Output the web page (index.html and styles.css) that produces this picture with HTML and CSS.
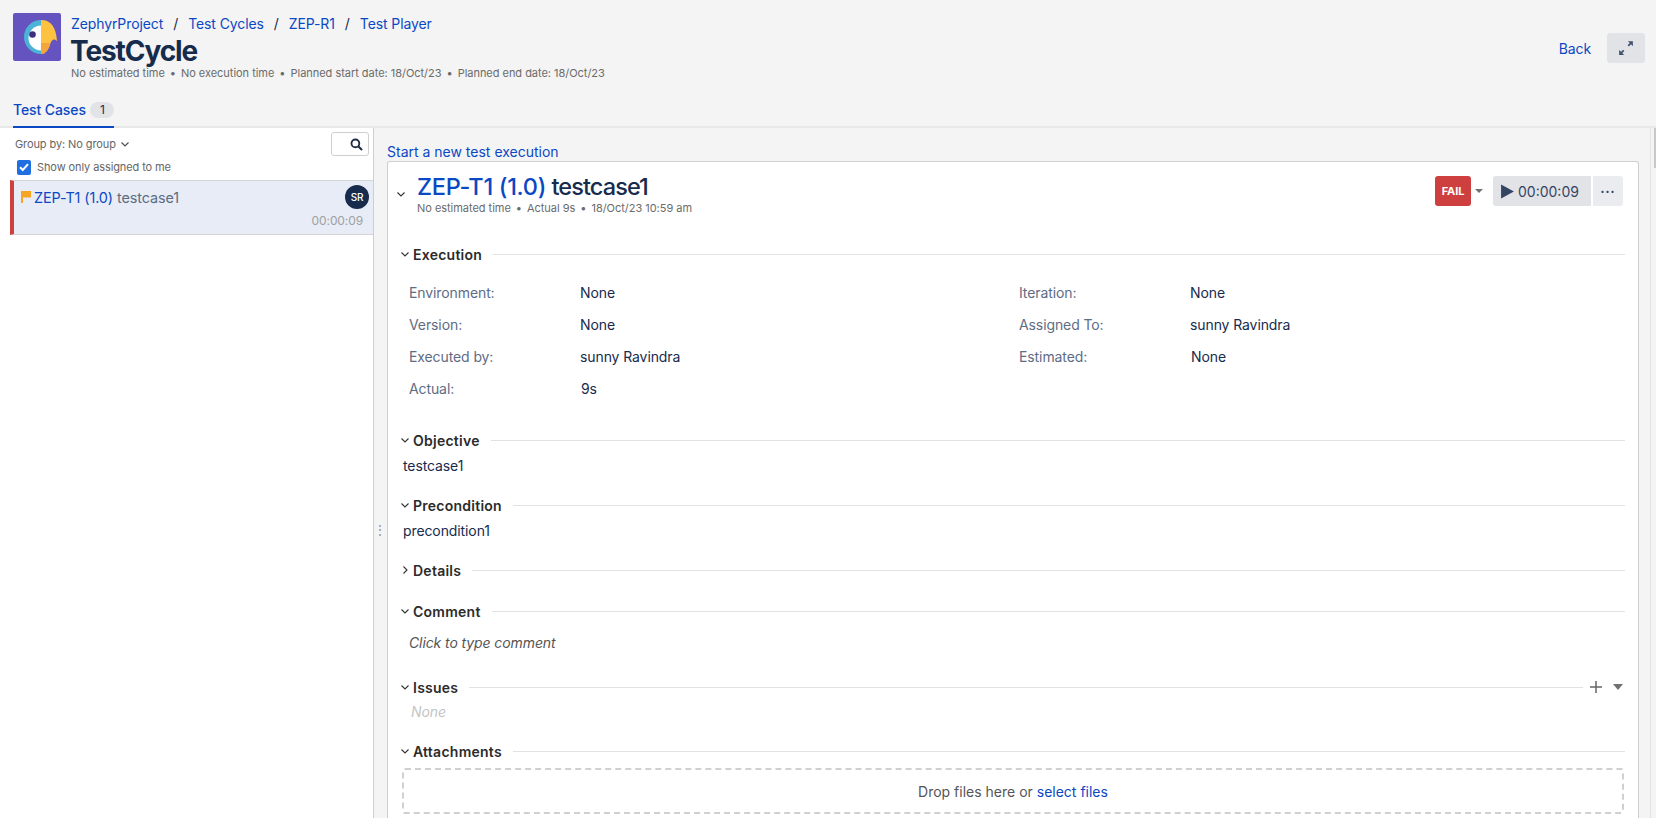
FILE: index.html
```html
<!DOCTYPE html>
<html lang="en">
<head>
    <meta charset="UTF-8">
    <meta name="viewport" content="width=device-width, initial-scale=1.0">
    <title>Test Player</title>
    <link rel="stylesheet" href="styles.css">
</head>
<body>

    <!-- Page header -->
    <header class="page-header">
        <svg class="logo" viewBox="0 0 48 48" width="48" height="48">
            <rect width="48" height="48" rx="2" fill="#6554c0"/>
            <path d="M28 7A17 17 0 0 0 28 41Z" fill="#4bb3d6"/>
            <path d="M28 12.5A11.5 11.5 0 0 0 28 37.500Z" fill="#fff"/>
            <path d="M28 7C38 7 43 14 44 28C41 25.500 39 26.500 37.500 30C36 36 33 41 28 41Z" fill="#fcc240"/>
            <path d="M28 30H37.300C36 36 33 41 28 41Z" fill="#f4a63b"/>
            <circle cx="19.500" cy="21.500" r="3.300" fill="#40307f"/>
        </svg>
        <div class="header-text">
            <nav class="crumbs">
                <a>ZephyrProject</a><span>/</span><a>Test Cycles</a><span>/</span><a>ZEP-R1</a><span>/</span><a>Test Player</a>
            </nav>
            <h1>TestCycle</h1>
            <div class="meta">No estimated time<i>•</i>No execution time<i>•</i>Planned start date: 18/Oct/23<i>•</i>Planned end date: 18/Oct/23</div>
        </div>
        <div class="header-actions">
            <a class="back">Back</a>
            <button class="expand">
                <svg viewBox="0 0 16 16" width="20" height="20"><path d="M9.500 2.500H13.500V6.500L12 5 10.300 6.700 9.300 5.700 11 4ZM6.500 13.500H2.500V9.500L4 11 5.700 9.300 6.700 10.300 5 12Z" fill="#42526e"/></svg>
            </button>
        </div>
    </header>

    <div class="tabs">
        <div class="tab">Test Cases <span class="count">1</span></div>
    </div>

    <main class="player">
        <!-- Left list -->
        <aside class="side">
            <div class="side-tools">
                <div class="side-filters">
                    <div class="group-by">Group by: No group
                        <svg class="chev" viewBox="0 0 10 10" width="10" height="10"><path d="M1.500 3.500L5 7 8.500 3.500" fill="none" stroke="#505050" stroke-width="1.200"/></svg>
                    </div>
                    <label class="only-me">
                        <span class="check"><svg viewBox="0 0 14 14" width="14" height="14"><path d="M3 7.200L5.800 10 11 4.200" fill="none" stroke="#fff" stroke-width="2"/></svg></span>
                        Show only assigned to me
                    </label>
                </div>
                <button class="search">
                    <svg viewBox="0 0 14 14" width="13" height="13"><circle cx="5.800" cy="5.800" r="4.200" fill="none" stroke="#1f2a44" stroke-width="2"/><path d="M8.800 8.800L13 13" stroke="#1f2a44" stroke-width="2.200"/></svg>
                </button>
            </div>
            <div class="case-item">
                <div class="case-top">
                    <svg class="flag" viewBox="0 0 10 12" width="10" height="12"><path d="M0 0H10V6.500H2V12H0Z" fill="#f5a623"/></svg>
                    <span class="case-name"><a>ZEP-T1 (1.0)</a> testcase1</span>
                    <span class="avatar">SR</span>
                </div>
                <div class="case-time">00:00:09</div>
            </div>
        </aside>

        <div class="splitter"><span class="dots">⋮</span></div>

        <!-- Execution panel -->
        <section class="content">
            <a class="start-link">Start a new test execution</a>
            <div class="card">
                <div class="card-head">
                    <svg class="title-chev" viewBox="0 0 10 10" width="10" height="10"><path d="M1.500 3.500L5 7 8.500 3.500" fill="none" stroke="#333" stroke-width="1.100"/></svg>
                    <div class="title-block">
                        <h2><a>ZEP-T1 (1.0)</a> testcase1</h2>
                        <div class="meta">No estimated time<i>•</i>Actual 9s<i>•</i>18/Oct/23 10:59 am</div>
                    </div>
                    <div class="card-actions">
                        <span class="status">FAIL</span>
                        <span class="caret"></span>
                        <button class="timer">
                            <svg viewBox="0 0 14 14" width="15" height="15"><path d="M1 0.500L13 7 1 13.500Z" fill="#344563"/></svg>
                            00:00:09
                        </button>
                        <button class="more">•••</button>
                    </div>
                </div>

                <div class="sec-head sec-execution">
                    <svg viewBox="0 0 10 10" width="10" height="10"><path d="M1.500 3.500L5 7 8.500 3.500" fill="none" stroke="#333" stroke-width="1.100"/></svg>
                    <b>Execution</b><hr>
                </div>
                <div class="fields">
                    <div class="field"><span>Environment:</span>None</div>
                    <div class="field"><span>Iteration:</span>None</div>
                    <div class="field"><span>Version:</span>None</div>
                    <div class="field"><span>Assigned To:</span>sunny Ravindra</div>
                    <div class="field"><span>Executed by:</span>sunny Ravindra</div>
                    <div class="field field-off"><span>Estimated:</span>None</div>
                    <div class="field field-off"><span>Actual:</span>9s</div>
                </div>

                <div class="sec-head sec-objective">
                    <svg viewBox="0 0 10 10" width="10" height="10"><path d="M1.500 3.500L5 7 8.500 3.500" fill="none" stroke="#333" stroke-width="1.100"/></svg>
                    <b>Objective</b><hr>
                </div>
                <p class="sec-text">testcase1</p>

                <div class="sec-head sec-precondition">
                    <svg viewBox="0 0 10 10" width="10" height="10"><path d="M1.500 3.500L5 7 8.500 3.500" fill="none" stroke="#333" stroke-width="1.100"/></svg>
                    <b>Precondition</b><hr>
                </div>
                <p class="sec-text">precondition1</p>

                <div class="sec-head sec-details">
                    <svg viewBox="0 0 10 10" width="10" height="10"><path d="M3.500 1.500L7 5 3.500 8.500" fill="none" stroke="#333" stroke-width="1.100"/></svg>
                    <b>Details</b><hr>
                </div>

                <div class="sec-head sec-comment">
                    <svg viewBox="0 0 10 10" width="10" height="10"><path d="M1.500 3.500L5 7 8.500 3.500" fill="none" stroke="#333" stroke-width="1.100"/></svg>
                    <b>Comment</b><hr>
                </div>
                <p class="comment-hint">Click to type comment</p>

                <div class="sec-head sec-issues">
                    <svg viewBox="0 0 10 10" width="10" height="10"><path d="M1.500 3.500L5 7 8.500 3.500" fill="none" stroke="#333" stroke-width="1.100"/></svg>
                    <b>Issues</b><hr>
                    <svg class="plus" viewBox="0 0 12 12" width="12" height="12"><path d="M6 0V12M0 6H12" stroke="#666" stroke-width="1.500"/></svg>
                    <span class="caret"></span>
                </div>
                <p class="none-text">None</p>

                <div class="sec-head sec-attachments">
                    <svg viewBox="0 0 10 10" width="10" height="10"><path d="M1.500 3.500L5 7 8.500 3.500" fill="none" stroke="#333" stroke-width="1.100"/></svg>
                    <b>Attachments</b><hr>
                </div>
                <div class="dropzone">Drop files here or <a>select files</a></div>
            </div>
        </section>

        <div class="scroll-track"><span class="scroll-thumb"></span></div>
    </main>

</body>
</html>
```

FILE: styles.css
```css
* {
    box-sizing: border-box;
}
html, body {
    height: 100%;
}
body {
    margin: 0;
    height: 818px;
    overflow: hidden;
    background-color: #f4f4f4;
    color: #172b4d;
    font-family: Inter, "Liberation Sans", sans-serif;
    font-size: 14px;
    letter-spacing: -0.1px;
}
a {
    color: #0b48c4;
}
button {
    border: none;
    font-family: inherit;
}
.page-header {
    display: flex;
    height: 92px;
    padding: 13px 11px 0 13px;
}
.logo {
    flex: none;
    margin-right: 10px;
}
.header-text {
    flex: 1;
}
.crumbs {
    display: flex;
    height: 22px;
    line-height: 22px;
    font-size: 14px;
}
.crumbs span {
    margin: 0 10px;
    color: #172b4d;
}
h1 {
    margin: 1px 0 0 -1px;
    height: 30px;
    line-height: 30px;
    font-size: 28px;
    font-weight: 700;
    letter-spacing: -1.1px;
    color: #172b4d;
}
.meta {
    font-size: 11px;
    line-height: 14px;
    color: #6b6b6b;
    letter-spacing: -0.03px;
}
.meta i {
    margin: 0 5px;
    font-style: normal;
}
.header-actions {
    display: flex;
    align-items: flex-start;
    padding-top: 20px;
}
.back {
    margin: 7px 16px 0 0;
    line-height: 17px;
}
.expand {
    display: flex;
    align-items: center;
    justify-content: center;
    width: 38px;
    height: 30px;
    padding: 0;
    border-radius: 3px;
    background-color: #e2e3e7;
}
.tabs {
    height: 36px;
    padding-left: 13px;
    border-bottom: 2px solid #e8e8e8;
}
.tab {
    display: inline-block;
    width: 101px;
    height: 36px;
    border-bottom: 2px solid #0b48c4;
    color: #0b48c4;
    font-weight: 500;
    font-size: 14px;
    line-height: 36px;
    white-space: nowrap;
}
.count {
    display: inline-block;
    width: 24px;
    height: 16px;
    margin-left: 1px;
    border-radius: 8px;
    background-color: #e2e3e7;
    color: #172b4d;
    font-size: 12px;
    font-weight: 400;
    line-height: 16px;
    text-align: center;
    vertical-align: 1px;
}
.player {
    display: flex;
    height: 690px;
    overflow: hidden;
}
.side {
    flex: none;
    width: 374px;
    padding-left: 10px;
    background-color: #fff;
    border-right: 1px solid #cfcfcf;
}
.side-tools {
    display: flex;
    justify-content: space-between;
    height: 52px;
    padding-top: 4px;
}
.group-by {
    padding-left: 5px;
    height: 24px;
    line-height: 24px;
    font-size: 11px;
    color: #666;
}
.chev {
    margin-left: 1px;
    vertical-align: -1px;
}
.only-me {
    display: flex;
    align-items: center;
    gap: 6px;
    margin-top: 4px;
    padding-left: 7px;
    font-size: 11px;
    color: #666;
    line-height: 15px;
}
.check {
    display: block;
    width: 14px;
    height: 15px;
    border-radius: 2px;
    background-color: #1f6fe0;
}
.search {
    display: flex;
    align-items: center;
    justify-content: flex-end;
    width: 38px;
    height: 24px;
    margin-right: 4px;
    padding-right: 5px;
    background-color: #fff;
    border: 1px solid #cfcfcf;
    border-radius: 3px;
}
.case-item {
    height: 55px;
    padding: 7px 4px 0 7px;
    border-top: 1px solid #d4d4d4;
    border-bottom: 1px solid #d4d4d4;
    border-left: 4px solid #ce3f3f;
    background-color: #e7ecf6;
}
.case-top {
    display: flex;
    align-items: flex-start;
}
.flag {
    margin-top: 3px;
    margin-right: 3px;
}
.case-name {
    flex: 1;
    color: #5e6c84;
    font-size: 14.4px;
    line-height: 20px;
}
.avatar {
    width: 24px;
    height: 24px;
    margin-top: -3px;
    border-radius: 50%;
    background-color: #172b4d;
    color: #fff;
    font-size: 10px;
    font-weight: 500;
    line-height: 24px;
    text-align: center;
}
.case-time {
    margin-top: 4px;
    padding-right: 6px;
    color: #a0a0a0;
    font-size: 12px;
    line-height: 15px;
    text-align: right;
}
.splitter {
    flex: none;
    width: 13px;
    padding: 392px 4px 0 0;
    text-align: center;
}
.dots {
    color: #8a8a8a;
    font-size: 12px;
    line-height: 12px;
}
.content {
    flex: none;
    width: 1252px;
    padding-top: 15px;
}
.start-link {
    display: block;
    height: 18px;
    line-height: 18px;
    font-size: 14px;
    letter-spacing: 0;
}
.card {
    height: 657px;
    padding: 0 16px 0 15px;
    background-color: #fff;
    border: 1px solid #cfcfcf;
    border-bottom: none;
    border-radius: 3px 3px 0 0;
}
.card-head {
    display: flex;
    height: 78px;
    padding-top: 9px;
}
.title-chev {
    margin: 18px 7px 0 -7px;
}
.title-block {
    flex: 1;
    padding-left: 4px;
}
h2 {
    margin: 1px 0 0;
    height: 30px;
    line-height: 30px;
    font-size: 23.5px;
    font-weight: 500;
    letter-spacing: -0.9px;
    color: #172b4d;
}
h2 a {
    letter-spacing: -0.3px;
}
.title-block .meta {
    margin-top: -1px;
    line-height: 14px;
}
.card-actions {
    display: flex;
    align-items: flex-start;
    margin-top: 5px;
    margin-right: -1px;
}
.status {
    width: 36px;
    height: 30px;
    border-radius: 3px;
    background-color: #ce3f3f;
    color: #fff;
    font-size: 11px;
    font-weight: 700;
    line-height: 30px;
    text-align: center;
}
.caret {
    width: 0;
    height: 0;
    border-left: 4px solid transparent;
    border-right: 4px solid transparent;
    border-top: 4px solid #707070;
}
.card-actions .caret {
    margin: 13px 10px 0 4px;
}
.timer {
    display: flex;
    align-items: center;
    gap: 3px;
    width: 98px;
    height: 30px;
    margin-right: 2px;
    padding: 0 0 0 7px;
    border-radius: 3px 0 0 3px;
    background-color: #e2e3e7;
    color: #344563;
    font-size: 14px;
    letter-spacing: 0;
}
.more {
    width: 30px;
    height: 30px;
    padding: 0;
    border-radius: 0 3px 3px 0;
    background-color: #ebecf0;
    color: #344563;
    font-size: 7px;
    letter-spacing: 1px;
}
.sec-head {
    display: flex;
    align-items: center;
    gap: 3px;
    height: 20px;
    margin-right: -3px;
    color: #2b2b2b;
    font-size: 14px;
}
.sec-head > svg:first-child {
    margin-left: -3px;
}
.sec-head b {
    font-weight: 600;
    letter-spacing: 0.25px;
    white-space: nowrap;
}
.sec-head hr {
    flex: 1;
    height: 1px;
    margin: 0 0 0 8px;
    border: none;
    background-color: #e2e2e2;
}
.sec-execution {
    margin-top: 4px;
}
.fields {
    display: grid;
    grid-template-columns: 610px 1fr;
    grid-auto-rows: 32px;
    margin-top: 13px;
    padding-left: 6px;
}
.field {
    display: flex;
    align-items: center;
    line-height: 32px;
    color: #172b4d;
}
.field span {
    flex: none;
    width: 171px;
    color: #5e6c84;
}
.field-off span {
    width: 172px;
}
.sec-objective {
    margin-top: 25px;
}
.sec-text {
    margin: 6px 0 0;
    line-height: 20px;
}
.sec-precondition {
    margin-top: 19px;
}
.sec-details {
    margin-top: 19px;
}
.sec-comment {
    margin-top: 21px;
}
.comment-hint {
    margin: 12px 0 0;
    padding-left: 6px;
    color: #555;
    font-style: italic;
    line-height: 20px;
}
.sec-issues {
    margin-top: 24px;
}
.plus {
    margin-left: 4px;
}
.sec-issues .caret {
    margin: 0 2px 0 8px;
    border-left-width: 5px;
    border-right-width: 5px;
    border-top-width: 6px;
}
.none-text {
    margin: 5px 0 0;
    padding-left: 8px;
    color: #c4c4c4;
    font-style: italic;
    line-height: 20px;
}
.sec-attachments {
    margin-top: 19px;
}
.dropzone {
    height: 46px;
    margin: 7px -2px 0 -1px;
    border: 2px dashed #d0d0d0;
    border-radius: 3px;
    color: #555;
    font-size: 14px;
    letter-spacing: 0;
    line-height: 44px;
    text-align: center;
}
.scroll-track {
    flex: 1;
    margin-left: 11px;
    border-left: 1px solid #e4e4e4;
}
.scroll-thumb {
    display: block;
    width: 2px;
    height: 40px;
    margin-left: 3px;
    background-color: #c8c8c8;
}
```
